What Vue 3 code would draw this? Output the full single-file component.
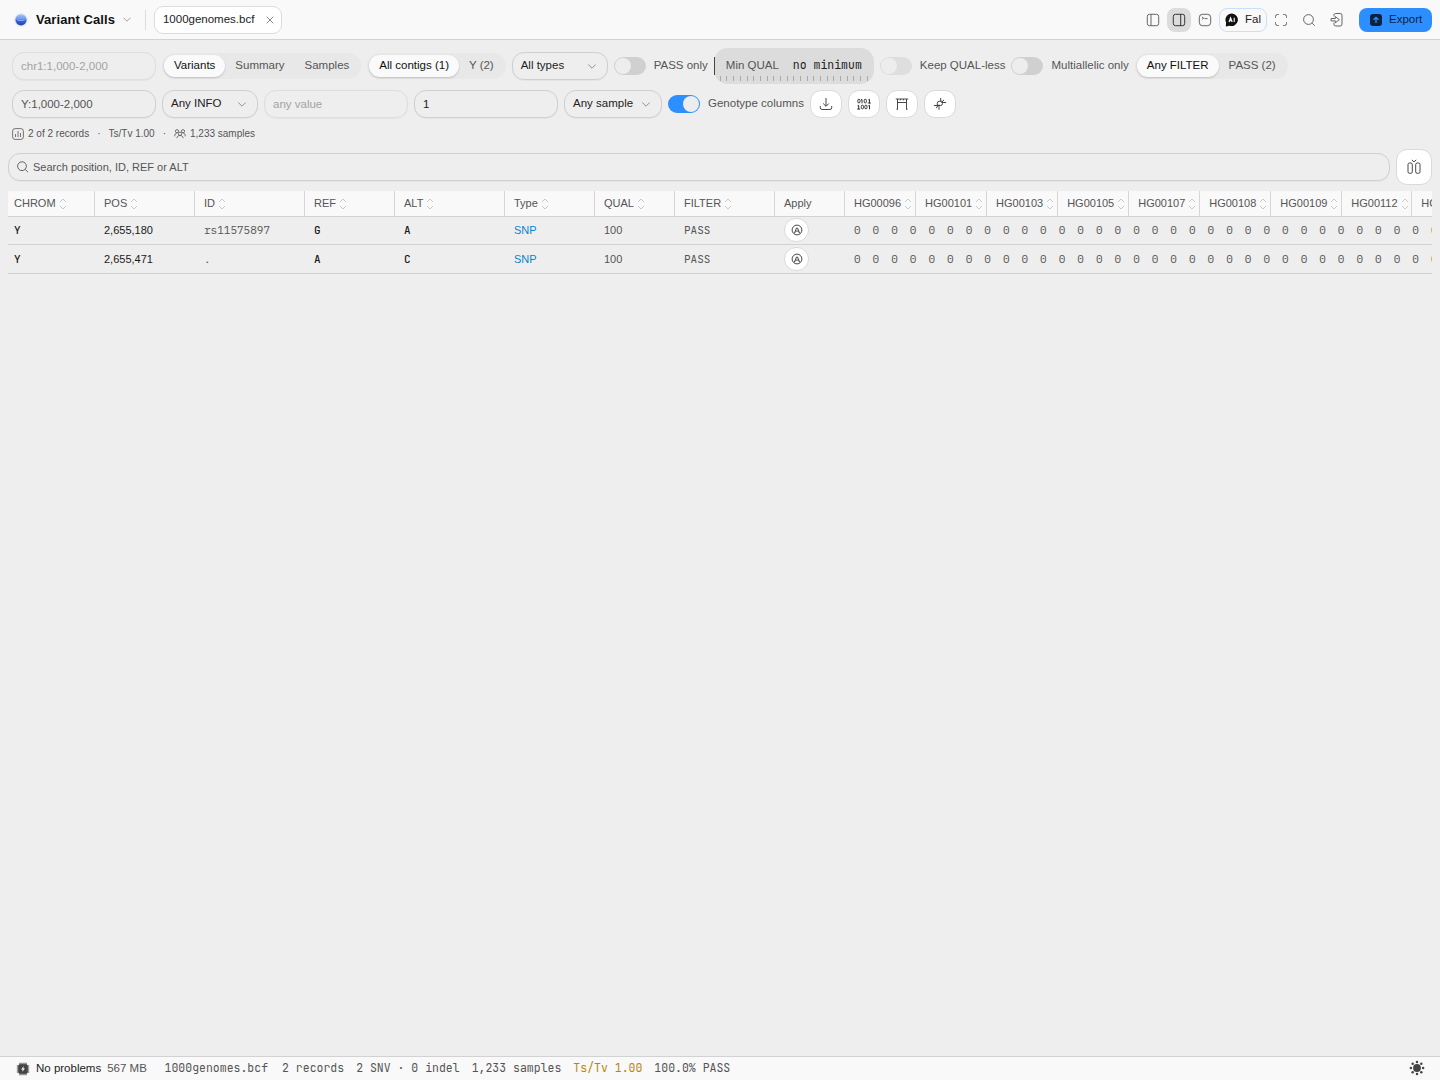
<script setup>
import { ref } from "vue";

const view = ref("Variants");
const contig = ref("All contigs (1)");
const filter = ref("Any FILTER");
const region = ref("");
const target = ref("Y:1,000-2,000");
const infoValue = ref("");
const minimum = ref("1");
const search = ref("");
const passOnly = ref(false);
const multiallelic = ref(false);
const genotypes = ref(true);

const views = ["Variants", "Summary", "Samples"];
const contigs = ["All contigs (1)", "Y (2)"];
const filters = ["Any FILTER", "PASS (2)"];

const columns = [
	{ name: "CHROM", width: 87 },
	{ name: "POS", width: 100 },
	{ name: "ID", width: 110 },
	{ name: "REF", width: 90 },
	{ name: "ALT", width: 110 },
	{ name: "Type", width: 90 },
	{ name: "QUAL", width: 80 },
	{ name: "FILTER", width: 100 },
	{ name: "Apply", width: 70, fixed: true },
	{ name: "HG00096", width: 71.06 },
	{ name: "HG00101", width: 71.06 },
	{ name: "HG00103", width: 71.06 },
	{ name: "HG00105", width: 71.06 },
	{ name: "HG00107", width: 71.06 },
	{ name: "HG00108", width: 71.06 },
	{ name: "HG00109", width: 71.06 },
	{ name: "HG00112", width: 70 },
	{ name: "HG00113", width: 71 },
];

const records = [
	{ chrom: "Y", pos: "2,655,180", id: "rs11575897", ref: "G", alt: "A" },
	{ chrom: "Y", pos: "2,655,471", id: ".", ref: "A", alt: "C" },
];
</script>

<template>
	<div class="app">
		<header class="titlebar">
			<svg class="logo" width="14" height="14" viewBox="0 0 14 14">
				<defs>
					<linearGradient id="globe" x1="0" y1="0" x2="0" y2="1">
						<stop offset="0" stop-color="#a9c2f2" />
						<stop offset="0.42" stop-color="#6f9bf0" />
						<stop offset="0.55" stop-color="#3566d8" />
						<stop offset="1" stop-color="#2346a4" />
					</linearGradient>
				</defs>
				<circle cx="7" cy="7" r="7" fill="#e4ecfa" />
				<circle cx="7" cy="6.8" r="5.6" fill="url(#globe)" />
				<path d="M3.4 7q3.6 1 7.2 0" stroke="#a9c6fb" stroke-width="0.8" fill="none" />
			</svg>
			<h1>Variant Calls</h1>
			<svg class="title-chevron" width="8" height="5" viewBox="0 0 8 5"><path d="M.5 .7 4 4.2 7.5 .7" /></svg>
			<span class="divider"></span>
			<div class="tab">
				<span>1000genomes.bcf</span>
				<svg width="8" height="8" viewBox="0 0 8 8"><path d="M.7 .7l6.6 6.6M7.3 .7L.7 7.3" /></svg>
			</div>
			<div class="tools">
				<button class="tool">
					<svg width="14" height="14" viewBox="0 0 14 14"><rect x="1.3" y="1.3" width="11.4" height="11.4" rx="2.2" /><path d="M5 1.5v11" /></svg>
				</button>
				<button class="tool active">
					<svg width="14" height="14" viewBox="0 0 14 14"><rect x="1.3" y="1.3" width="11.4" height="11.4" rx="2.2" /><path d="M8.7 1.5v11" /></svg>
				</button>
				<button class="tool">
					<svg width="14" height="14" viewBox="0 0 14 14"><rect x="1.3" y="1.3" width="11.4" height="11.4" rx="3.2" /><path d="M4 4l1.7 1.2L4 6.4M6.5 5.6h3" /></svg>
				</button>
				<button class="fal">
					<svg width="14" height="14" viewBox="0 0 14 14">
						<path class="bubble" d="M7 .5a6.5 6.3 0 1 1-2.5 12.3L.8 13.5l.3-3.9A6.5 6.3 0 0 1 7 .5z" />
						<path class="ai" d="M4 9l1.6-4.2L7.2 9M4.5 7.8h2.2M9.2 4.7V9" />
					</svg>
					<span>Fal</span>
				</button>
				<button class="tool">
					<svg width="14" height="14" viewBox="0 0 14 14"><path d="M1.5 4.8V3.5a2 2 0 0 1 2-2h1.3M9.2 1.5h1.3a2 2 0 0 1 2 2v1.3M12.5 9.2v1.3a2 2 0 0 1-2 2H9.2M4.8 12.5H3.5a2 2 0 0 1-2-2V9.2" /></svg>
				</button>
				<button class="tool magnify">
					<svg width="14" height="14" viewBox="0 0 14 14"><circle cx="6.5" cy="6.5" r="4.9" /><path d="M10.2 10.2l2.5 2.5" /></svg>
				</button>
				<button class="tool leave">
					<svg width="14" height="14" viewBox="0 0 14 14"><path d="M3.9 3.4V2.3A1.9 1.9 0 0 1 5.8.5h4.3A1.9 1.9 0 0 1 12 2.3v8.8a1.9 1.9 0 0 1-1.9 1.9H5.8a1.9 1.9 0 0 1-1.9-1.9V9.8M1.1 5.5h4.2V3.5L9.3 6.7 5.3 9.9V7.9H1.1z" /></svg>
				</button>
				<button class="export">
					<svg width="12" height="12" viewBox="0 0 12 12"><rect width="12" height="12" rx="3" fill="#0c2340" /><path d="M6 9V3.5M3.5 5.8L6 3.3l2.5 2.5" stroke="#2d8fff" stroke-width="1.3" fill="none" /></svg>
					<span>Export</span>
				</button>
			</div>
		</header>

		<section class="filters">
			<div class="line">
				<input v-model="region" class="field faded" placeholder="chr1:1,000-2,000" />
				<div class="segments">
					<button v-for="v in views" :key="v" :class="{ on: view === v }" @click="view = v">{{ v }}</button>
				</div>
				<div class="segments">
					<button v-for="c in contigs" :key="c" :class="{ on: contig === c }" @click="contig = c">{{ c }}</button>
				</div>
				<button class="select">
					All types
					<svg width="8" height="5" viewBox="0 0 8 5"><path d="M.3 .5 4 4.2 7.7 .5" /></svg>
				</button>
				<label class="switch" @click="passOnly = !passOnly">
					<i :class="{ on: passOnly }"></i><span>PASS only</span>
				</label>
				<div class="slider">
					<span>Min QUAL</span>
					<strong class="mono">no minimum</strong>
					<div class="ticks"><i v-for="n in 23" :key="n"></i></div>
				</div>
				<label class="switch disabled"><i></i><span>Keep QUAL-less</span></label>
				<label class="switch" @click="multiallelic = !multiallelic">
					<i :class="{ on: multiallelic }"></i><span>Multiallelic only</span>
				</label>
				<div class="segments">
					<button v-for="f in filters" :key="f" :class="{ on: filter === f }" @click="filter = f">{{ f }}</button>
				</div>
			</div>
			<div class="line">
				<input v-model="target" class="field" />
				<button class="select">
					Any INFO
					<svg width="8" height="5" viewBox="0 0 8 5"><path d="M.3 .5 4 4.2 7.7 .5" /></svg>
				</button>
				<input v-model="infoValue" class="field faded" placeholder="any value" />
				<input v-model="minimum" class="field dark" />
				<button class="select sample">
					Any sample
					<svg width="8" height="5" viewBox="0 0 8 5"><path d="M.3 .5 4 4.2 7.7 .5" /></svg>
				</button>
				<label class="switch" @click="genotypes = !genotypes">
					<i :class="{ on: genotypes }"></i><span>Genotype columns</span>
				</label>
				<button class="action">
					<svg width="14" height="14" viewBox="0 0 14 14"><path d="M7 1v8M4.2 6.5L7 9.3l2.8-2.8M1.3 9v1.7a1.8 1.8 0 0 0 1.8 1.8h7.8a1.8 1.8 0 0 0 1.8-1.8V9" /></svg>
				</button>
				<button class="action">
					<svg class="bits" width="14" height="14" viewBox="0 0 14 14">
						<rect x=".8" y="2.3" width="2.2" height="3.6" rx="1.1" /><path d="M4 3l1-.7v4.1" /><rect x="7.2" y="2.3" width="2.2" height="3.6" rx="1.1" /><path d="M11.3 3l1.2-.7v4.1M10.8 6h3" />
						<path d="M.5 8.9l1.2-.7v4.1M.2 12h3" /><rect x="4.3" y="8.2" width="2.2" height="3.6" rx="1.1" /><rect x="7.8" y="8.2" width="2.2" height="3.6" rx="1.1" /><path d="M11.3 8.9l1.2-.7v4.1" />
					</svg>
				</button>
				<button class="action">
					<svg width="14" height="14" viewBox="0 0 14 14"><path d="M.8 2h12.4M2.5 2v10M11.5 2v10M2.5 5.5h9M5.5 2v1.3M8.5 2v1.3M1.5 12.3h1.5M11 12.3h1.5" /></svg>
				</button>
				<button class="action">
					<svg width="14" height="14" viewBox="0 0 14 14"><path d="M.8 8.5h6.7a2 2 0 0 0 2-2v-2.200H6.300a2 2 0 0 0-2 2V10M13.200 5.500H8.300M6 12.800V7.500M7.700 1v3.300M4.300 10l-1.300 1M9.500 4.300l1.500-1.300" /></svg>
				</button>
			</div>
			<div class="stats">
				<svg width="12" height="12" viewBox="0 0 12 12"><rect x=".6" y=".6" width="10.8" height="10.8" rx="2.5" /><path d="M3.5 9V6M6 9V3M8.5 9V5" /></svg>
				<span>2 of 2 records</span><b>·</b><span>Ts/Tv 1.00</span><b>·</b>
				<svg width="12" height="12" viewBox="0 0 12 12"><circle cx="6" cy="5.8" r="1.7" /><circle cx="3" cy="3.2" r="1.6" /><circle cx="9" cy="3.2" r="1.6" /><path d="M2.8 10.2c.3-2 1.5-2.7 3.2-2.7s2.9.7 3.2 2.7M.8 8.3c-.2-2 .6-3.2 2.5-3.5M11.2 8.3c.2-2-.6-3.2-2.5-3.5" /></svg>
				<span>1,233 samples</span>
			</div>
		</section>

		<div class="searchbar">
			<div class="search">
				<svg width="12" height="12" viewBox="0 0 12 12"><circle cx="5" cy="5.2" r="4.4" /><path d="M8.3 8.5l2.7 2.7" /></svg>
				<input v-model="search" placeholder="Search position, ID, REF or ALT" />
			</div>
			<button class="columns">
				<svg width="16" height="16" viewBox="0 0 16 16"><rect x="2" y="4" width="4.3" height="10.3" rx="1.5" /><rect x="9.700" y="4" width="4.3" height="10.3" rx="1.5" /><path d="M5.8 .9l2.2 2 2.2-2" /></svg>
			</button>
		</div>

		<main class="table">
			<div class="thead">
				<div v-for="col in columns" :key="col.name" class="cell" :style="{ width: col.width + 'px' }">
					<span>{{ col.name }}</span>
					<svg v-if="!col.fixed" width="8" height="12" viewBox="0 0 8 12"><path d="M1 4l3-3 3 3M1 8l3 3 3-3" /></svg>
				</div>
			</div>
			<div v-for="row in records" :key="row.pos" class="row">
				<div class="cell c0 mono strong">{{ row.chrom }}</div>
				<div class="cell c1 strong">{{ row.pos }}</div>
				<div class="cell c2 code">{{ row.id }}</div>
				<div class="cell c3 mono strong">{{ row.ref }}</div>
				<div class="cell c4 mono strong">{{ row.alt }}</div>
				<div class="cell c5 snp">SNP</div>
				<div class="cell c6">100</div>
				<div class="cell c7 mono">PASS</div>
				<div class="cell c8">
					<button class="apply">
						<svg width="12" height="12" viewBox="0 0 12 12"><circle cx="6" cy="6" r="4.9" /><path d="M3.3 9.3L5.5 4a.6.6 0 0 1 1 0L8.7 9.3M4.3 8l1.7-1.3L7.7 8" /></svg>
					</button>
				</div>
				<div class="genotypes code"><span v-for="n in 32" :key="n">0</span></div>
			</div>
		</main>

		<footer class="statusbar">
			<svg class="chip" width="14" height="14" viewBox="0 0 14 14">
				<path d="M4 .8v12.4M6 .8v12.4M8 .8v12.4M10 .8v12.4M.8 4h12.4M.8 6h12.4M.8 8h12.4M.8 10h12.4" stroke="#444" stroke-width="1.1" />
				<rect x="2.2" y="2.2" width="9.6" height="9.6" rx="2" fill="#444" />
				<path d="M7.8 4L5 7.5h1.7L6.2 10 9 6.5H7.3z" fill="#f9f9f9" />
			</svg>
			<span class="problems">No problems</span>
			<span class="memory">567 MB</span>
			<div class="facts mono">
				<span>1000genomes.bcf</span>
				<span>2 records</span>
				<span>2 SNV · 0 indel</span>
				<span>1,233 samples</span>
				<span class="ratio">Ts/Tv 1.00</span>
				<span>100.0% PASS</span>
			</div>
			<svg class="sun" width="16" height="16" viewBox="0 0 16 16">
				<circle cx="8" cy="8" r="3.9" />
				<circle cx="8" cy="1.9" r="1.25" /><circle cx="8" cy="14.1" r="1.25" /><circle cx="1.9" cy="8" r="1.25" /><circle cx="14.1" cy="8" r="1.25" />
				<circle cx="3.7" cy="3.7" r="1.25" /><circle cx="12.3" cy="3.7" r="1.25" /><circle cx="3.7" cy="12.3" r="1.25" /><circle cx="12.3" cy="12.3" r="1.25" />
			</svg>
		</footer>
	</div>
</template>

<style>
body {
	margin: 0;
	overflow: hidden;
}
</style>

<style scoped>
* {
	box-sizing: border-box;
}

.app {
	display: flex;
	flex-direction: column;
	width: 100%;
	height: 100vh;
	background: #eee;
	color: #555;
	font: 11.5px/16px "Liberation Sans", Arial, sans-serif;
}

button,
input {
	margin: 0;
	font: inherit;
	color: inherit;
}

button {
	padding: 0;
	border: 0;
	background: none;
}

svg {
	display: block;
	flex: none;
	fill: none;
	stroke: #555;
	stroke-width: 0.9;
}

.mono {
	font-family: "JetBrains Mono", "Liberation Mono", monospace;
}

.code {
	font-family: "IBM Plex Mono", "Liberation Mono", monospace;
}

.titlebar {
	display: flex;
	align-items: center;
	flex: none;
	height: 40px;
	padding: 0 8px 0 14px;
	background: #f9f9f9;
	border-bottom: 1px solid #d2d2d2;
}

.logo {
	stroke: none;
	margin-right: 8px;
}

h1 {
	margin: 0;
	color: #111;
	font-size: 13px;
	font-weight: bold;
	letter-spacing: 0.07px;
}

.title-chevron {
	margin-left: 8px;
	stroke: #999;
}

.divider {
	width: 1px;
	height: 20px;
	margin: 0 8px 0 14px;
	background: #dcdcdc;
}

.tab {
	display: flex;
	align-items: center;
	justify-content: space-between;
	width: 128px;
	height: 28px;
	padding: 0 7px 0 8px;
	border: 1px solid #dcdcdc;
	border-radius: 9px;
	background: #fff;
	color: #222;
}

.tab svg {
	stroke-width: 0.7;
}

.tab span,
.export span,
.fal span {
	margin-bottom: 1px;
}

.tools {
	display: flex;
	align-items: center;
	margin-left: auto;
}

.tool {
	display: flex;
	align-items: center;
	justify-content: center;
	width: 24px;
	height: 24px;
	margin-right: 2px;
	border-radius: 8px;
}

.tool.active {
	background: #dcdcdc;
}

.tool.active svg {
	stroke: #222;
}

.fal {
	display: flex;
	align-items: center;
	gap: 6px;
	width: 48px;
	height: 24px;
	margin-right: 2px;
	padding-left: 5px;
	border: 1px solid #c9dffa;
	border-radius: 8px;
	color: #222;
}

.fal .bubble {
	fill: #111;
	stroke: none;
}

.fal .ai {
	stroke: #fff;
	stroke-width: 1.1;
}

.magnify,
.leave {
	margin-left: 2px;
}

.export {
	display: flex;
	align-items: center;
	gap: 7px;
	width: 73px;
	height: 24px;
	margin-left: 8px;
	padding-left: 11px;
	border-radius: 8px;
	background: #2d8fff;
	color: #0c2340;
}

.export svg {
	stroke: none;
}

.filters {
	display: flex;
	flex-direction: column;
	gap: 6px;
	padding: 8px 12px 0;
}

.line {
	display: flex;
	align-items: center;
	gap: 6px;
}

.field,
.select {
	height: 28px;
	padding: 0 8px;
	border: 1px solid #cfcfcf;
	border-radius: 12px;
	background: #eee;
	box-shadow: 0 1px 1px rgba(0, 0, 0, 0.04);
}

.field {
	width: 144px;
	outline: none;
}

.faded {
	border-color: #dedede;
}

.field::placeholder {
	color: #a3a3a3;
}

.dark {
	color: #222;
}

.segments {
	display: flex;
	height: 26px;
	padding: 2px;
	border-radius: 13px;
	background: #e8e8e8;
}

.segments button {
	height: 22px;
	padding: 0 10px 2px;
	border-radius: 11px;
}

.segments .on {
	background: #fafafa;
	color: #111;
	box-shadow: 0 1px 2px rgba(0, 0, 0, 0.18);
}

.select {
	display: flex;
	align-items: center;
	justify-content: space-between;
	width: 96px;
	padding: 0 11px 2px 8px;
	color: #222;
}

.select svg {
	position: relative;
	top: 1px;
	stroke: #888;
}

.sample {
	width: 98px;
}

.switch {
	display: flex;
	align-items: center;
	white-space: nowrap;
}

.switch span {
	margin-bottom: 2px;
}

.switch i {
	width: 32px;
	height: 18px;
	margin-right: 8px;
	padding: 1px;
	border-radius: 9px;
	background: #d0d0d0;
}

.switch i::before {
	content: "";
	display: block;
	width: 16px;
	height: 16px;
	border-radius: 50%;
	background: #ededed;
}

.switch i.on {
	background: #2d8fff;
}

.switch i.on::before {
	margin-left: 14px;
}

.disabled i {
	background: #dedede;
}

.slider {
	position: relative;
	display: flex;
	justify-content: space-between;
	width: 160px;
	height: 36px;
	padding: 9px 12px;
	border-radius: 14px;
	background: #dcdcdc;
}

.slider::before {
	content: "";
	position: absolute;
	top: 9px;
	left: 0;
	width: 1px;
	height: 18px;
	background: #444;
}

.slider strong {
	color: #222;
	font-weight: normal;
}

.ticks {
	position: absolute;
	left: 6px;
	right: 6px;
	bottom: 3px;
	display: flex;
	justify-content: space-between;
}

.ticks i {
	width: 1px;
	height: 5px;
	background: #a8a8a8;
}

.action,
.columns {
	display: flex;
	align-items: center;
	justify-content: center;
	width: 32px;
	height: 28px;
	border: 1px solid #dadada;
	border-radius: 11px;
	background: #fff;
}

.action svg {
	stroke: #333;
}

.action .bits {
	stroke-width: 1;
}

.stats {
	display: flex;
	align-items: center;
	height: 19px;
	font-size: 10px;
}

.stats svg {
	stroke-width: 0.8;
}

.stats span {
	margin-left: 4px;
}

.stats b {
	margin: 0 4px 0 8px;
	font-weight: normal;
}

.stats b:nth-of-type(2) {
	margin-right: 8px;
}

.searchbar {
	display: flex;
	align-items: center;
	gap: 6px;
	padding: 6px 8px;
}

.search {
	display: flex;
	align-items: center;
	flex: 1;
	height: 28px;
	padding-left: 8px;
	border: 1px solid #cfcfcf;
	border-radius: 12px;
	box-shadow: 0 1px 1px rgba(0, 0, 0, 0.04);
}

.search input {
	flex: 1;
	margin-left: 4px;
	padding: 0;
	border: 0;
	background: none;
	outline: none;
	font-size: 11px;
}

.search input::placeholder {
	color: #555;
}

.columns {
	width: 36px;
	height: 36px;
}

.columns svg {
	stroke: #333;
}

.table {
	flex: 1;
	margin: 0 8px;
	overflow: hidden;
	font-size: 11px;
}

.thead,
.row {
	display: flex;
	border-bottom: 1px solid #d2d2d2;
}

.thead {
	height: 26px;
	background: #f9f9f9;
}

.thead span {
	margin-bottom: 1px;
}

.row {
	height: 28px;
	padding-bottom: 1px;
}

.row + .row {
	height: 29px;
	padding-bottom: 0;
}

.cell {
	display: flex;
	align-items: center;
	flex: none;
	padding-left: 9px;
}

.cell:first-child {
	padding-left: 6px;
}

.thead .cell {
	border-right: 1px solid #d6d6d6;
}

.thead svg {
	margin-left: 3px;
	stroke: #c4c4c4;
}

.c0 {
	width: 87px;
}

.c1 {
	width: 100px;
}

.c2 {
	width: 110px;
}

.c3 {
	width: 90px;
}

.c4 {
	width: 110px;
}

.c5 {
	width: 90px;
}

.c6 {
	width: 80px;
}

.c7 {
	width: 100px;
}

.c8 {
	width: 70px;
}

.strong {
	color: #1a1a1a;
}

.mono.strong {
	font-weight: 500;
}

.snp {
	color: #0a84d0;
}

.apply {
	display: flex;
	align-items: center;
	justify-content: center;
	width: 25px;
	height: 24px;
	border: 1px solid #dadada;
	border-radius: 12px;
	background: #fff;
}

.apply svg {
	stroke: #333;
}

.genotypes {
	display: flex;
	align-items: center;
	gap: 12px;
	padding-left: 9px;
}

.statusbar {
	display: flex;
	align-items: center;
	flex: none;
	height: 24px;
	padding: 0 16px;
	border-top: 1px solid #d2d2d2;
	background: #f9f9f9;
}

.statusbar span {
	margin-bottom: 1px;
}

.chip,
.sun {
	stroke: none;
}

.problems {
	margin: 0 6px;
	color: #222;
}

.facts {
	display: flex;
	gap: 12px;
	margin-left: 17.7px;
}

.facts span:first-child {
	margin-right: 2px;
}

.ratio {
	color: #b8860b;
}

.sun {
	margin-left: auto;
	margin-right: -0.5px;
	margin-bottom: 1px;
	fill: #444;
}
</style>
